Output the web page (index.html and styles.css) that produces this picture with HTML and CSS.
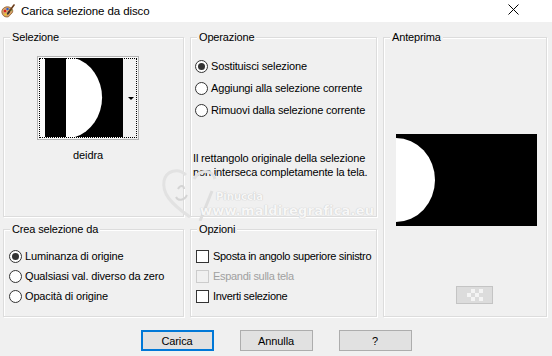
FILE: index.html
```html
<!DOCTYPE html>
<html lang="it">
<head>
<meta charset="utf-8">
<title>Carica selezione da disco</title>
<link rel="stylesheet" href="styles.css">
</head>
<body>
<div class="window">
  <header class="titlebar">
    <svg class="app-icon" width="14" height="14" viewBox="0 0 14 14">
      <path d="M1 9 C0 5 4 2 8 3 C12 4 13 8 10 10 C8 11 9 13 6 13 C3 13 1.5 11 1 9 Z" fill="#d9a36b" stroke="#8a5a2b" stroke-width="0.8"/>
      <circle cx="4" cy="7" r="1.3" fill="#d22"/>
      <circle cx="6.5" cy="5" r="1.2" fill="#2a5fd8"/>
      <circle cx="9.5" cy="6" r="1.2" fill="#3aa33a"/>
      <circle cx="4.5" cy="10.5" r="1.1" fill="#f0d020"/>
      <path d="M13 1 L7.5 8.5" stroke="#6b3c1a" stroke-width="1.6" stroke-linecap="round"/>
      <path d="M8 8 L6.8 9.8" stroke="#333" stroke-width="1.8" stroke-linecap="round"/>
    </svg>
    <span class="title">Carica selezione da disco</span>
    <svg class="close" width="11" height="11" viewBox="0 0 11 11">
      <path d="M0.5 0.5 L10.5 10.5 M10.5 0.5 L0.5 10.5" stroke="#000" stroke-width="1"/>
    </svg>
  </header>

  <main class="dialog">
    <div class="groups">
      <section class="group g-sel">
        <div class="legend">Selezione</div>
        <div class="picker">
          <div class="thumb-frame">
            <svg class="thumb" width="78" height="79" viewBox="0 0 78 79">
              <rect width="78" height="79" fill="#000"/>
              <path d="M21 0 L30 0 A37 41 0 0 1 30 79 L21 79 Z" fill="#fff"/>
            </svg>
            <div class="thumb-drop"><span class="drop-arrow"></span></div>
          </div>
          <div class="thumb-name">deidra</div>
        </div>
      </section>

      <section class="group g-op">
        <div class="legend">Operazione</div>
        <div class="options op-list">
          <label class="opt"><span class="radio on"></span>Sostituisci selezione</label>
          <label class="opt"><span class="radio"></span>Aggiungi alla selezione corrente</label>
          <label class="opt"><span class="radio"></span>Rimuovi dalla selezione corrente</label>
        </div>
        <p class="note">Il rettangolo originale della selezione<br>non interseca completamente la tela.</p>
      </section>

      <section class="group g-prev">
        <div class="legend">Anteprima</div>
        <svg class="preview" width="141" height="92" viewBox="0 0 141 92">
          <rect width="141" height="92" fill="#000"/>
          <path d="M0 4 A39 42 0 0 1 0 88 Z" fill="#fff"/>
        </svg>
        <div class="bg-btn">
          <svg width="16" height="12" viewBox="0 0 16 12">
            <g fill="#f4f4f4">
              <rect x="4" y="0" width="4" height="4"/><rect x="12" y="0" width="4" height="4"/>
              <rect x="0" y="4" width="4" height="4"/><rect x="8" y="4" width="4" height="4"/>
              <rect x="4" y="8" width="4" height="4"/><rect x="12" y="8" width="4" height="4"/>
            </g>
          </svg>
        </div>
      </section>

      <section class="group g-src">
        <div class="legend">Crea selezione da</div>
        <div class="options src-list">
          <label class="opt row20"><span class="radio on"></span>Luminanza di origine</label>
          <label class="opt row20"><span class="radio"></span>Qualsiasi val. diverso da zero</label>
          <label class="opt row20"><span class="radio"></span>Opacità di origine</label>
        </div>
      </section>

      <section class="group g-opt">
        <div class="legend">Opzioni</div>
        <div class="options chk-list">
          <label class="opt row20"><span class="check"></span>Sposta in angolo superiore sinistro</label>
          <label class="opt row20 disabled"><span class="check"></span>Espandi sulla tela</label>
          <label class="opt row20"><span class="check"></span>Inverti selezione</label>
        </div>
      </section>
    </div>

    <div class="buttons">
      <button class="btn default">Carica</button>
      <button class="btn">Annulla</button>
      <button class="btn">?</button>
    </div>
  </main>

  <div class="watermark" aria-hidden="true">
    <svg class="wm-heart" width="60" height="56" viewBox="0 0 60 56">
      <path d="M30 52 C10 38 2 28 4 16 C6 6 18 2 26 10 M34 14 C40 4 52 4 55 14" fill="none" stroke="#e2e2e2" stroke-width="3"/>
      <path d="M18 24 C20 20 24 20 24 24 M27 30 C24 36 18 36 16 32" fill="none" stroke="#d4d4d4" stroke-width="2"/>
      <path d="M52 26 L40 56" fill="none" stroke="#dedede" stroke-width="3"/>
    </svg>
    <span class="wm-name">Pinuccia</span>
    <span class="wm-url">www.maldiregrafica.eu</span>
  </div>
</div>
</body>
</html>
```

FILE: styles.css
```css
* { box-sizing: border-box; }

html, body {
  margin: 0;
  padding: 0;
}

body {
  width: 552px;
  height: 356px;
  overflow: hidden;
  background: #f0f0f0;
  font-family: "Liberation Sans", Arial, sans-serif;
  font-size: 11px;
  color: #000;
}

.window {
  position: relative;
  width: 552px;
  height: 356px;
}

/* Title bar */
.titlebar {
  height: 22px;
  background: #fff;
  display: flex;
  align-items: center;
  padding: 0 0 1px 1px;
}
.app-icon { flex: none; margin-top: 1px; }
.title {
  margin-left: 6px;
  font-size: 11.5px;
  letter-spacing: -0.1px;
}
.close { margin-left: auto; margin-right: 33px; margin-top: -2px; }

/* Dialog body */
.dialog {
  display: flex;
  flex-direction: column;
}

.groups {
  display: grid;
  grid-template-columns: 181px 187px 164px;
  grid-template-rows: 180px 88px;
  column-gap: 6px;
  row-gap: 12px;
  margin: 15px 0 0 3px;
}

.group {
  display: flex;
  flex-direction: column;
  border: 1px solid #dcdcdc;
  box-shadow: inset 1px 1px 0 #fff, 1px 1px 0 #fff;
  min-width: 0;
}

.legend {
  align-self: flex-start;
  margin: -7px 0 0 6px;
  padding: 0 2px;
  line-height: 13px;
  background: #f0f0f0;
  letter-spacing: -0.15px;
}

.g-prev { grid-column: 3; grid-row: 1 / 3; }
.g-src { grid-column: 1; grid-row: 2; }
.g-opt { grid-column: 2; grid-row: 2; }

/* Selezione picker */
.picker {
  align-self: flex-start;
  margin: 12px 0 0 33px;
  display: flex;
  flex-direction: column;
  align-items: center;
  width: 102px;
}
.thumb-frame {
  width: 102px;
  height: 84px;
  border: 1px solid #b4b4b4;
  background: #fafafa;
  outline: 1px dotted #000;
  outline-offset: -3px;
  display: flex;
  padding: 1px 0 0 7px;
}
.thumb { display: block; flex: none; }
.thumb-drop {
  flex: 1;
  display: flex;
  align-items: center;
  justify-content: flex-end;
  padding-right: 4px;
  background: #f2f2f2;
}
.drop-arrow {
  width: 0;
  height: 0;
  border-left: 3px solid transparent;
  border-right: 3px solid transparent;
  border-top: 3px solid #000;
}
.thumb-name {
  margin-top: 9px;
  line-height: 13px;
  font-size: 11px;
  letter-spacing: -0.1px;
}

/* Options */
.options {
  display: flex;
  flex-direction: column;
  letter-spacing: -0.15px;
}
.opt {
  display: flex;
  align-items: center;
  height: 22px;
  gap: 3px;
  white-space: nowrap;
}
.row20 { height: 20px; }

.op-list { margin: 11px 0 0 4px; }
.src-list { margin: 10px 0 0 5px; }
.chk-list { margin: 10px 0 0 5px; gap: 0; letter-spacing: -0.3px; }
.chk-list .opt { gap: 4px; }

.radio {
  flex: none;
  width: 13px;
  height: 13px;
  border-radius: 50%;
  border: 1px solid #333;
  background: #fff;
  display: flex;
  align-items: center;
  justify-content: center;
}
.radio.on::after {
  content: "";
  width: 7px;
  height: 7px;
  border-radius: 50%;
  background: #333;
}

.check {
  flex: none;
  width: 13px;
  height: 13px;
  border: 1px solid #333;
  background: #fff;
}
.disabled { color: #a0a0a0; }
.disabled .check { border-color: #cccccc; background: #f0f0f0; }

.note {
  margin: 31px 0 0 2px;
  line-height: 13.5px;
  letter-spacing: -0.15px;
}

/* Preview */
.preview {
  display: block;
  margin: 90px 0 0 12px;
}
.bg-btn {
  align-self: flex-start;
  margin: 60px 0 0 72px;
  width: 37px;
  height: 18px;
  border: 1px solid #c4c4c4;
  background: #dcdcdc;
  display: flex;
  align-items: center;
  justify-content: center;
}
.bg-btn svg { display: block; }

/* Buttons */
.buttons {
  display: flex;
  justify-content: center;
  gap: 26px;
  margin-top: 13px;
}
.btn {
  width: 73px;
  height: 21px;
  padding: 0;
  border: 1px solid #adadad;
  background: #e1e1e1;
  font-family: "Liberation Sans", Arial, sans-serif;
  font-size: 11px;
  color: #000;
  letter-spacing: -0.1px;
}
.btn.default {
  border-color: #0078d7;
  box-shadow: inset 0 0 0 1px #0078d7;
}

/* Watermark overlay */
.watermark {
  position: absolute;
  left: 160px;
  top: 165px;
  width: 220px;
  height: 56px;
  pointer-events: none;
}
.wm-heart { position: absolute; left: 0; top: 0; }
.wm-name {
  position: absolute;
  left: 56px;
  top: 26px;
  font-family: "DejaVu Sans", sans-serif;
  font-weight: bold;
  font-size: 10px;
  color: #f7f7f7;
  text-shadow: 0 0 1px #c8c8c8, 0 0 1px #c8c8c8;
}
.wm-url {
  position: absolute;
  left: 40px;
  top: 38px;
  font-family: "DejaVu Sans", sans-serif;
  font-weight: bold;
  font-size: 13px;
  letter-spacing: 0.2px;
  color: #f7f7f7;
  text-shadow: 0 0 1px #cccccc, 0 0 1px #cccccc;
}
```
